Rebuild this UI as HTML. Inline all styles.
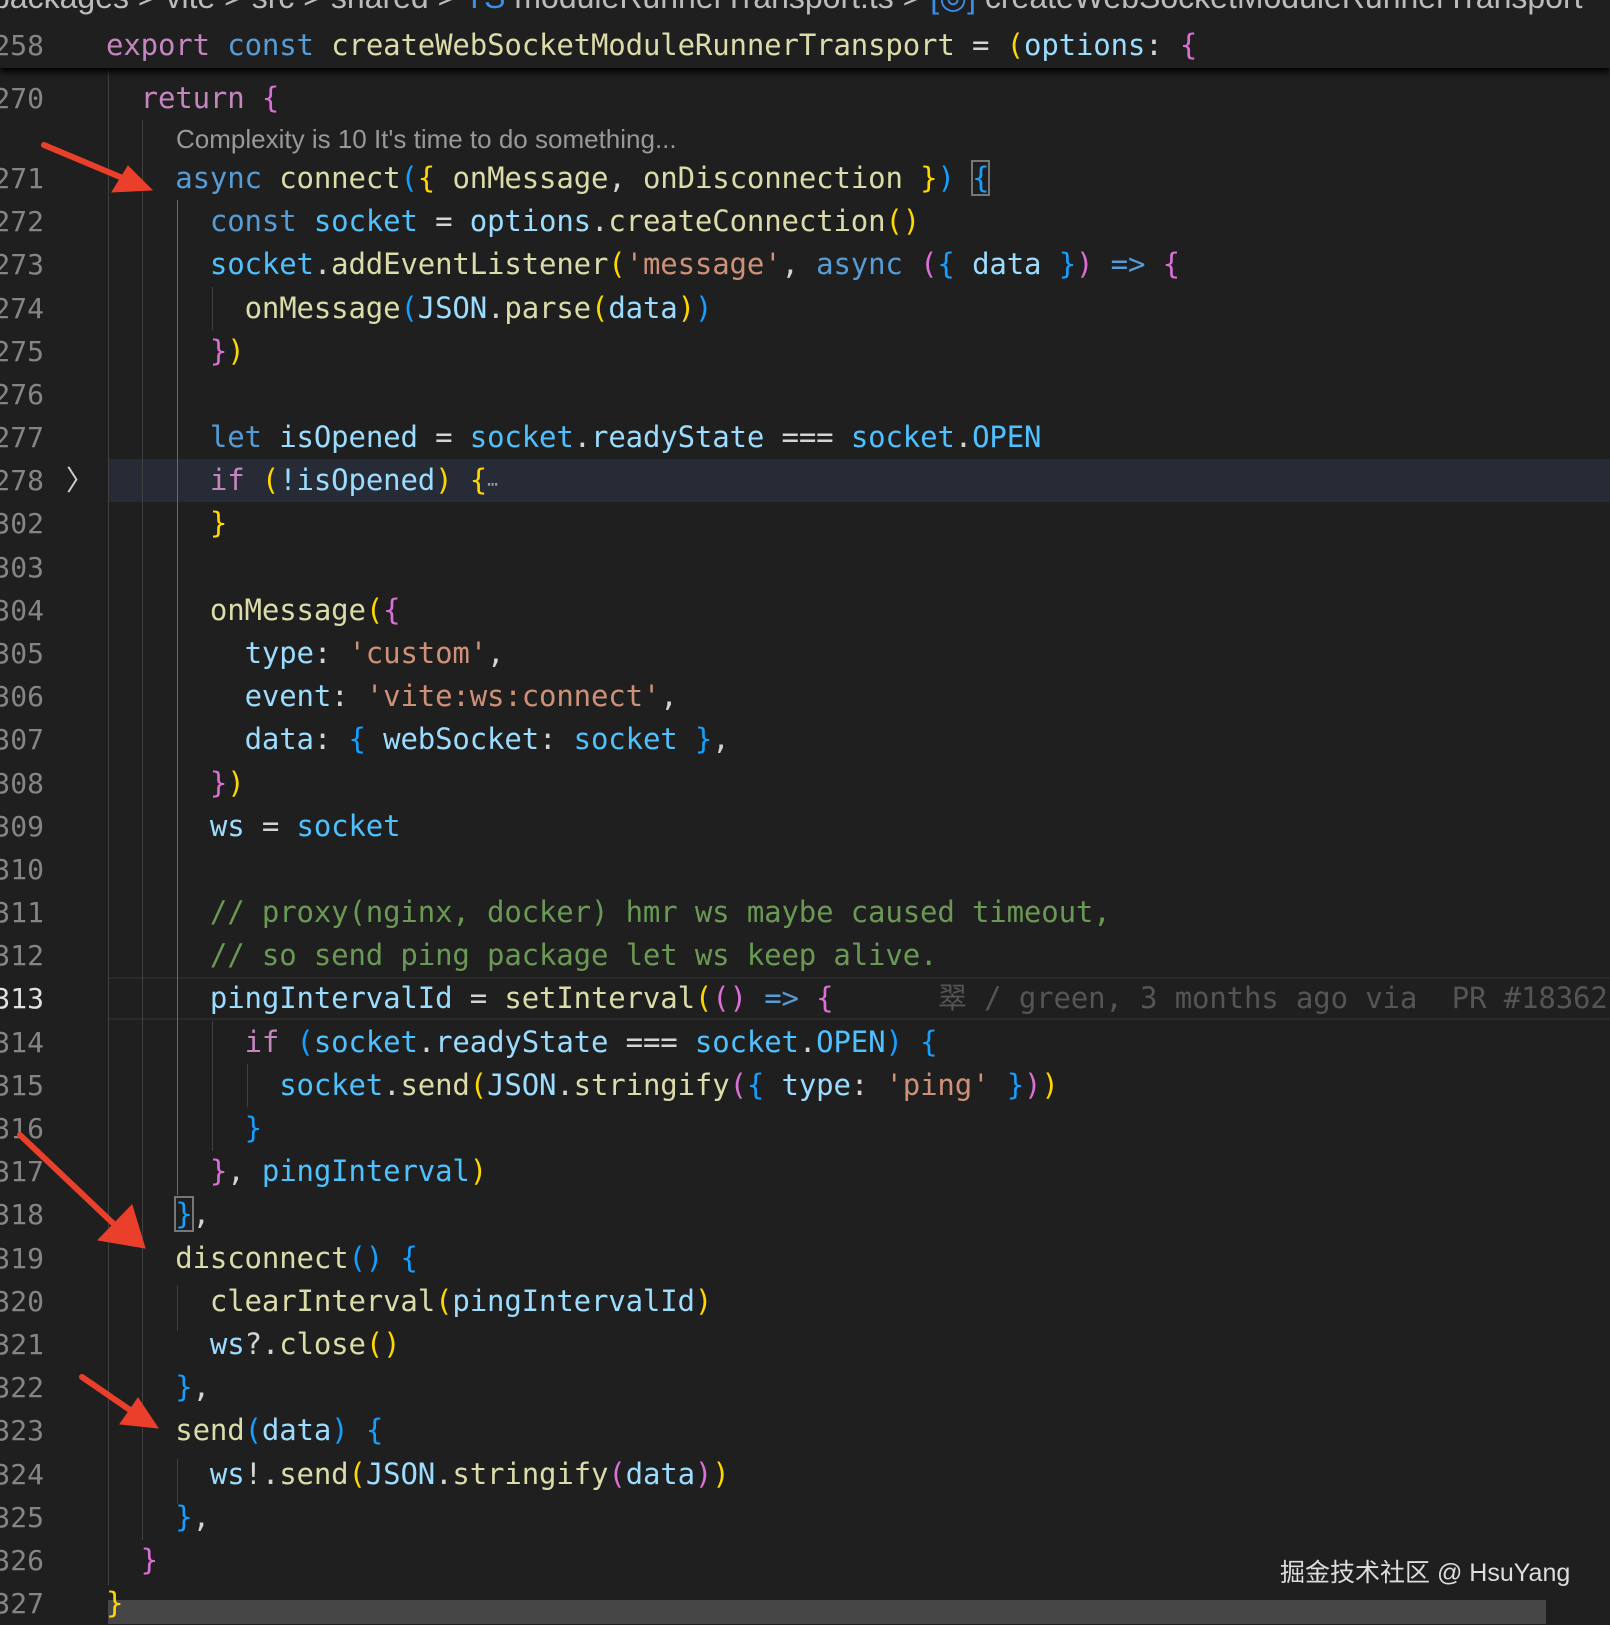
<!DOCTYPE html>
<html><head><meta charset="utf-8"><style>
body{margin:0;width:1610px;height:1624px;background:#1f1f1f;overflow:hidden;position:relative;font-family:"DejaVu Sans Mono","Liberation Mono",monospace;}
.r{position:absolute;left:0;height:43px;line-height:43px;width:1610px}
.n{position:absolute;left:-20px;width:64px;text-align:right;color:#858585;font-size:28px}
.c{position:absolute;left:106px;white-space:pre;font-size:29px;letter-spacing:-0.14px;color:#d4d4d4}
.k{color:#c586c0}.b{color:#569cd6}.f{color:#dcdcaa}.v{color:#9cdcfe}.o{color:#4fc1ff}.s{color:#ce9178}.cm{color:#6a9955}.y{color:#ffd700}.p{color:#da70d6}.l{color:#179fff}
.g{position:absolute;width:1px;background:#404040}
.box{outline:2px solid #777;outline-offset:-1px}
</style></head><body>
<div style="position:absolute;left:108px;top:459px;width:1502px;height:43px;background:#262b36"></div>
<div style="position:absolute;left:108px;top:977px;width:1502px;height:43px;border-top:2px solid #2a2a2a;border-bottom:2px solid #2a2a2a;box-sizing:border-box"></div>
<div class="g" style="left:108px;top:70px;height:1515px"></div>
<div class="g" style="left:142px;top:120px;height:1420px"></div>
<div class="g" style="left:177px;top:200px;height:995px;background:#6a6a6a"></div>
<div class="g" style="left:177px;top:1286px;height:45px"></div>
<div class="g" style="left:177px;top:1459px;height:45px"></div>
<div class="g" style="left:212px;top:287px;height:43px"></div>
<div class="g" style="left:212px;top:1021px;height:130px"></div>
<div class="g" style="left:247px;top:1064px;height:43px"></div>

<div style="position:absolute;left:0;top:0;width:1610px;height:68px;background:#1f1f1f;box-shadow:0 4px 6px #000;z-index:2">
<div style="position:absolute;left:-8px;top:-22px;white-space:nowrap;font-family:'Liberation Sans',sans-serif;font-size:32px;color:#bbb">packages &gt; vite &gt; src &gt; shared &gt; <span style="color:#3b8ee8">TS</span> moduleRunnerTransport.ts &gt; <span style="color:#3b8ee8">[◎]</span> createWebSocketModuleRunnerTransport</div>
<div class="r" style="top:24px"><span class="n">258</span><span class="c"><span class="k">export</span> <span class="b">const</span> <span class="f">createWebSocketModuleRunnerTransport</span> = <span class="y">(</span><span class="v">options</span>: <span class="p">{</span></span></div>
</div>

<div class="r" style="top:77px"><span class="n">270</span><span class="c">  <span class="k">return</span> <span class="p">{</span></span></div>
<div style="position:absolute;left:176px;top:124px;font-family:'Liberation Sans',sans-serif;font-size:26px;color:#999">Complexity is 10 It's time to do something...</div>

<div class="r" style="top:157px"><span class="n">271</span><span class="c">    <span class="b">async</span> <span class="f">connect</span><span class="l">(</span><span class="y">{</span> <span class="f">onMessage</span>, <span class="f">onDisconnection</span> <span class="y">}</span><span class="l">)</span> <span class="l box">{</span></span></div>
<div class="r" style="top:200px"><span class="n">272</span><span class="c">      <span class="b">const</span> <span class="o">socket</span> = <span class="v">options</span>.<span class="f">createConnection</span><span class="y">()</span></span></div>
<div class="r" style="top:243px"><span class="n">273</span><span class="c">      <span class="o">socket</span>.<span class="f">addEventListener</span><span class="y">(</span><span class="s">'message'</span>, <span class="b">async</span> <span class="p">(</span><span class="l">{</span> <span class="v">data</span> <span class="l">}</span><span class="p">)</span> <span class="b">=&gt;</span> <span class="p">{</span></span></div>
<div class="r" style="top:287px"><span class="n">274</span><span class="c">        <span class="f">onMessage</span><span class="l">(</span><span class="v">JSON</span>.<span class="f">parse</span><span class="y">(</span><span class="v">data</span><span class="y">)</span><span class="l">)</span></span></div>
<div class="r" style="top:330px"><span class="n">275</span><span class="c">      <span class="p">}</span><span class="y">)</span></span></div>
<div class="r" style="top:373px"><span class="n">276</span></div>
<div class="r" style="top:416px"><span class="n">277</span><span class="c">      <span class="b">let</span> <span class="v">isOpened</span> = <span class="o">socket</span>.<span class="v">readyState</span> === <span class="o">socket</span>.<span class="o">OPEN</span></span></div>
<div class="r" style="top:459px"><span class="n">278</span><span style="position:absolute;left:66px;color:#ccc;font-size:28px;font-family:'Liberation Sans',sans-serif">〉</span><span class="c">      <span class="k">if</span> <span class="y">(</span><span class="v">!isOpened</span><span class="y">)</span> <span class="y">{</span><span style="color:#999;font-size:18px">⋯</span></span></div>
<div class="r" style="top:502px"><span class="n">302</span><span class="c">      <span class="y">}</span></span></div>
<div class="r" style="top:546px"><span class="n">303</span></div>
<div class="r" style="top:589px"><span class="n">304</span><span class="c">      <span class="f">onMessage</span><span class="y">(</span><span class="p">{</span></span></div>
<div class="r" style="top:632px"><span class="n">305</span><span class="c">        <span class="v">type</span>: <span class="s">'custom'</span>,</span></div>
<div class="r" style="top:675px"><span class="n">306</span><span class="c">        <span class="v">event</span>: <span class="s">'vite:ws:connect'</span>,</span></div>
<div class="r" style="top:718px"><span class="n">307</span><span class="c">        <span class="v">data</span>: <span class="l">{</span> <span class="v">webSocket</span>: <span class="o">socket</span> <span class="l">}</span>,</span></div>
<div class="r" style="top:762px"><span class="n">308</span><span class="c">      <span class="p">}</span><span class="y">)</span></span></div>
<div class="r" style="top:805px"><span class="n">309</span><span class="c">      <span class="v">ws</span> = <span class="o">socket</span></span></div>
<div class="r" style="top:848px"><span class="n">310</span></div>
<div class="r" style="top:891px"><span class="n">311</span><span class="c cm">      // proxy(nginx, docker) hmr ws maybe caused timeout,</span></div>
<div class="r" style="top:934px"><span class="n">312</span><span class="c cm">      // so send ping package let ws keep alive.</span></div>
<div class="r" style="top:977px"><span class="n" style="color:#e0e0e0">313</span><span class="c">      <span class="v">pingIntervalId</span> = <span class="f">setInterval</span><span class="y">(</span><span class="p">()</span> <span class="b">=&gt;</span> <span class="p">{</span></span><span style="position:absolute;left:938px;white-space:pre;font-size:29px;letter-spacing:-0.14px;color:#555">翠 / green, 3 months ago via  PR #18362</span></div>
<div class="r" style="top:1021px"><span class="n">314</span><span class="c">        <span class="k">if</span> <span class="l">(</span><span class="o">socket</span>.<span class="v">readyState</span> === <span class="o">socket</span>.<span class="o">OPEN</span><span class="l">)</span> <span class="l">{</span></span></div>
<div class="r" style="top:1064px"><span class="n">315</span><span class="c">          <span class="o">socket</span>.<span class="f">send</span><span class="y">(</span><span class="v">JSON</span>.<span class="f">stringify</span><span class="p">(</span><span class="l">{</span> <span class="v">type</span>: <span class="s">'ping'</span> <span class="l">}</span><span class="p">)</span><span class="y">)</span></span></div>
<div class="r" style="top:1107px"><span class="n">316</span><span class="c">        <span class="l">}</span></span></div>
<div class="r" style="top:1150px"><span class="n">317</span><span class="c">      <span class="p">}</span>, <span class="o">pingInterval</span><span class="y">)</span></span></div>
<div class="r" style="top:1193px"><span class="n">318</span><span class="c">    <span class="l box">}</span>,</span></div>
<div class="r" style="top:1237px"><span class="n">319</span><span class="c">    <span class="f">disconnect</span><span class="l">()</span> <span class="l">{</span></span></div>
<div class="r" style="top:1280px"><span class="n">320</span><span class="c">      <span class="f">clearInterval</span><span class="y">(</span><span class="v">pingIntervalId</span><span class="y">)</span></span></div>
<div class="r" style="top:1323px"><span class="n">321</span><span class="c">      <span class="v">ws</span>?.<span class="f">close</span><span class="y">()</span></span></div>
<div class="r" style="top:1366px"><span class="n">322</span><span class="c">    <span class="l">}</span>,</span></div>
<div class="r" style="top:1409px"><span class="n">323</span><span class="c">    <span class="f">send</span><span class="l">(</span><span class="v">data</span><span class="l">)</span> <span class="l">{</span></span></div>
<div class="r" style="top:1453px"><span class="n">324</span><span class="c">      <span class="v">ws</span>!.<span class="f">send</span><span class="y">(</span><span class="v">JSON</span>.<span class="f">stringify</span><span class="p">(</span><span class="v">data</span><span class="p">)</span><span class="y">)</span></span></div>
<div class="r" style="top:1496px"><span class="n">325</span><span class="c">    <span class="l">}</span>,</span></div>
<div class="r" style="top:1539px"><span class="n">326</span><span class="c">  <span class="p">}</span></span></div>
<div style="position:absolute;left:108px;top:1600px;width:1438px;height:24px;background:#464646"></div>
<div class="r" style="top:1582px"><span class="n">327</span><span class="c"><span class="y">}</span></span></div>

<div style="position:absolute;left:1280px;top:1553px;font-family:'Liberation Sans','Noto Sans CJK SC',sans-serif;font-size:25px;color:#ddd;white-space:nowrap">掘金技术社区 @ HsuYang</div>

<svg style="position:absolute;left:0;top:0" width="1610" height="1624">
<g fill="#ea3f2a" stroke="#ea3f2a" stroke-width="6" stroke-linecap="round">
<line x1="44" y1="145" x2="125" y2="179"/>
<polygon points="152,190 112,192 128,166" stroke-width="1"/>
<line x1="20" y1="1135" x2="118" y2="1228"/>
<polygon points="145,1248 98,1240 132,1205" stroke-width="1"/>
<line x1="82" y1="1377" x2="133" y2="1412"/>
<polygon points="158,1428 120,1424 138,1398" stroke-width="1"/>
</g></svg>
</body></html>
